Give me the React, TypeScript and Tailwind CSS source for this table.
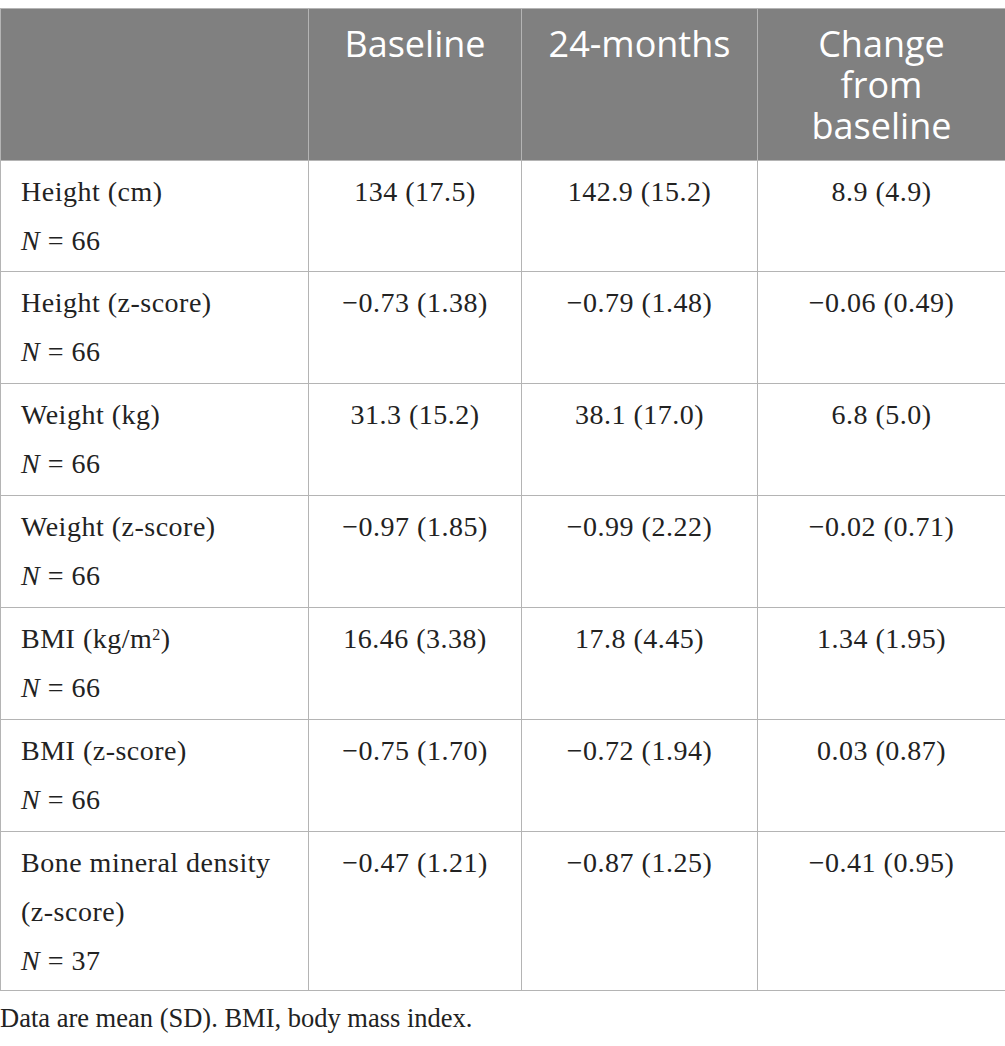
const rows: { label: string[]; n: string; values: string[] }[] = [
  { label: ["Height (cm)"], n: "66", values: ["134 (17.5)", "142.9 (15.2)", "8.9 (4.9)"] },
  { label: ["Height (z-score)"], n: "66", values: ["−0.73 (1.38)", "−0.79 (1.48)", "−0.06 (0.49)"] },
  { label: ["Weight (kg)"], n: "66", values: ["31.3 (15.2)", "38.1 (17.0)", "6.8 (5.0)"] },
  { label: ["Weight (z-score)"], n: "66", values: ["−0.97 (1.85)", "−0.99 (2.22)", "−0.02 (0.71)"] },
  { label: ["BMI"], n: "66", values: ["16.46 (3.38)", "17.8 (4.45)", "1.34 (1.95)"] },
  { label: ["BMI (z-score)"], n: "66", values: ["−0.75 (1.70)", "−0.72 (1.94)", "0.03 (0.87)"] },
  { label: ["Bone mineral density", "(z-score)"], n: "37", values: ["−0.47 (1.21)", "−0.87 (1.25)", "−0.41 (0.95)"] },
];

const headers = [["Baseline"], ["24-months"], ["Change", "from", "baseline"]];

export default function App() {
  return (
    <div className="bg-white pt-2 font-['Liberation_Serif',serif] text-[28px] text-[#222]">
      <table className="w-[1005px] border-collapse table-fixed">
        <colgroup>
          <col className="w-[308px]" />
          <col className="w-[213px]" />
          <col className="w-[236px]" />
          <col className="w-[248px]" />
        </colgroup>
        <thead>
          <tr className="bg-[#808080]">
            <th className="border border-[#b4b4b4]" />
            {headers.map((h) => (
              <th
                key={h[0]}
                className="border border-[#b4b4b4] align-top py-[14px] px-2 text-center font-['Open_Sans',sans-serif] font-normal text-[36px] leading-[41px] text-white"
              >
                {h.map((line) => (
                  <div key={line}>{line}</div>
                ))}
              </th>
            ))}
          </tr>
        </thead>
        <tbody className="tracking-[0.5px]">
          {rows.map((r, i) => {
            // first row is a pixel shorter, last one two
            const pad = i === 0 ? "pb-[6px]" : i === rows.length - 1 ? "pb-[5px]" : "pb-[7px]";
            return (
              <tr key={i}>
                <td className={`border border-[#b4b4b4] align-top pt-[6px] ${pad} pl-5 pr-2 leading-[49px]`}>
                  {r.label[0] === "BMI" ? (
                    <div>
                      BMI (kg/m<sup className="text-[16px]">2</sup>)
                    </div>
                  ) : (
                    r.label.map((l) => <div key={l}>{l}</div>)
                  )}
                  <div>
                    <i>N</i> = {r.n}
                  </div>
                </td>
                {r.values.map((v, j) => (
                  <td
                    key={j}
                    className={`border border-[#b4b4b4] align-top pt-[6px] ${pad} px-2 text-center leading-[49px]`}
                  >
                    {v}
                  </td>
                ))}
              </tr>
            );
          })}
        </tbody>
      </table>
      <p className="mt-[3px] text-[26.5px] leading-[49px]">Data are mean (SD). BMI, body mass index.</p>
    </div>
  );
}
